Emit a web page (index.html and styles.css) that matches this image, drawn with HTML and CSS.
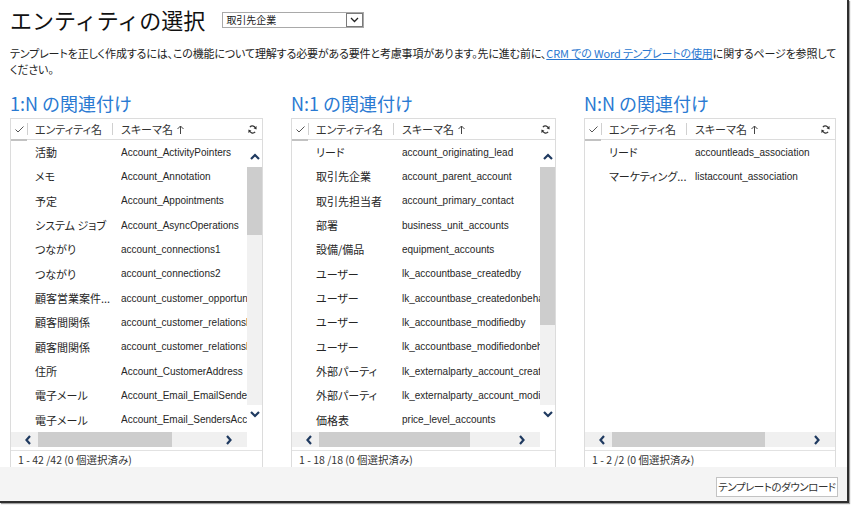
FILE: index.html
```html
<!DOCTYPE html>
<html lang="ja">
<head>
<meta charset="utf-8">
<title>エンティティの選択</title>
<link rel="stylesheet" href="styles.css">
</head>
<body>
<div class="frame">
  <div class="titlebar">
    <h1 class="title">エンティティの選択</h1>
    <div class="select">
      <span class="select-text">取引先企業</span>
      <span class="select-arrow"><svg width="9" height="6" viewBox="0 0 9 6"><polyline points="1,1 4.5,4.5 8,1" fill="none" stroke="#222" stroke-width="1.3"/></svg></span>
    </div>
  </div>
  <p class="desc">テンプレートを正しく作成するには、この機能について理解する必要がある要件と考慮事項があります。先に進む前に、<a class="link" href="#">CRM での Word テンプレートの使用</a>に関するページを参照して<br>ください。</p>

  <div class="panels">
    <section class="panel">
      <h2 class="panel-title">1:N の関連付け</h2>
      <div class="grid">
        <div class="grid-head">
          <span class="hcheck"><svg width="9" height="7" viewBox="0 0 9 7"><polyline points="0.5,3.5 3,6 8.5,0.5" fill="none" stroke="#555" stroke-width="1"/></svg></span>
          <span class="hsep"></span>
          <span class="hentity">エンティティ名</span>
          <span class="hsep"></span>
          <span class="hschema">スキーマ名 <svg width="7" height="9" viewBox="0 0 7 9"><path d="M3.5 9V1M0.5 4l3-3 3 3" fill="none" stroke="#444" stroke-width="1"/></svg></span>
          <span class="refresh"><svg width="9" height="9" viewBox="0 0 10 10"><path d="M8.6 4.2A3.7 3.7 0 0 0 2.1 2.4" fill="none" stroke="#333" stroke-width="1.4"/><path d="M1.4 5.8A3.7 3.7 0 0 0 7.9 7.6" fill="none" stroke="#333" stroke-width="1.4"/><path d="M9.6 1.2L9.4 5 6.2 3.6Z" fill="#333"/><path d="M0.4 8.8L0.6 5 3.8 6.4Z" fill="#333"/></svg></span>
        </div>
        <div class="grid-body">
          <div class="rows">
            <div class="row"><span class="c-entity">活動</span><span class="c-schema">Account_ActivityPointers</span></div>
            <div class="row"><span class="c-entity">メモ</span><span class="c-schema">Account_Annotation</span></div>
            <div class="row"><span class="c-entity">予定</span><span class="c-schema">Account_Appointments</span></div>
            <div class="row"><span class="c-entity">システム ジョブ</span><span class="c-schema">Account_AsyncOperations</span></div>
            <div class="row"><span class="c-entity">つながり</span><span class="c-schema">account_connections1</span></div>
            <div class="row"><span class="c-entity">つながり</span><span class="c-schema">account_connections2</span></div>
            <div class="row"><span class="c-entity">顧客営業案件...</span><span class="c-schema">account_customer_opportunity_roles</span></div>
            <div class="row"><span class="c-entity">顧客間関係</span><span class="c-schema">account_customer_relationship_customer</span></div>
            <div class="row"><span class="c-entity">顧客間関係</span><span class="c-schema">account_customer_relationship_partner</span></div>
            <div class="row"><span class="c-entity">住所</span><span class="c-schema">Account_CustomerAddress</span></div>
            <div class="row"><span class="c-entity">電子メール</span><span class="c-schema">Account_Email_EmailSender</span></div>
            <div class="row"><span class="c-entity">電子メール</span><span class="c-schema">Account_Email_SendersAccount</span></div>
          </div>
          <div class="vscroll">
            <span class="vbtn vbtn-up"><svg width="10" height="7" viewBox="0 0 10 7"><polyline points="1,6 5,2 9,6" fill="none" stroke="#1f3a60" stroke-width="2.2"/></svg></span>
            <span class="vthumb" style="height:68px"></span>
            <span class="vtrack"></span>
            <span class="vbtn vbtn-down"><svg width="10" height="7" viewBox="0 0 10 7"><polyline points="1,1 5,5 9,1" fill="none" stroke="#1f3a60" stroke-width="2.2"/></svg></span>
          </div>
        </div>
        <div class="hscroll with-v">
          <span class="hbtn hbtn-left"><svg width="6" height="10" viewBox="0 0 6 10"><polyline points="5,1 1.5,5 5,9" fill="none" stroke="#1f3a60" stroke-width="2.2"/></svg></span>
          <span class="hthumb" style="width:134px"></span>
          <span class="htrack"></span>
          <span class="hbtn hbtn-right"><svg width="6" height="10" viewBox="0 0 6 10"><polyline points="1,1 4.5,5 1,9" fill="none" stroke="#1f3a60" stroke-width="2.2"/></svg></span>
        </div>
        <div class="hgap"></div>
        <div class="grid-foot">1 - 42 /42 (0 個選択済み)</div>
      </div>
    </section>

    <section class="panel">
      <h2 class="panel-title">N:1 の関連付け</h2>
      <div class="grid">
        <div class="grid-head">
          <span class="hcheck"><svg width="9" height="7" viewBox="0 0 9 7"><polyline points="0.5,3.5 3,6 8.5,0.5" fill="none" stroke="#555" stroke-width="1"/></svg></span>
          <span class="hsep"></span>
          <span class="hentity">エンティティ名</span>
          <span class="hsep"></span>
          <span class="hschema">スキーマ名 <svg width="7" height="9" viewBox="0 0 7 9"><path d="M3.5 9V1M0.5 4l3-3 3 3" fill="none" stroke="#444" stroke-width="1"/></svg></span>
          <span class="refresh"><svg width="9" height="9" viewBox="0 0 10 10"><path d="M8.6 4.2A3.7 3.7 0 0 0 2.1 2.4" fill="none" stroke="#333" stroke-width="1.4"/><path d="M1.4 5.8A3.7 3.7 0 0 0 7.9 7.6" fill="none" stroke="#333" stroke-width="1.4"/><path d="M9.6 1.2L9.4 5 6.2 3.6Z" fill="#333"/><path d="M0.4 8.8L0.6 5 3.8 6.4Z" fill="#333"/></svg></span>
        </div>
        <div class="grid-body">
          <div class="rows">
            <div class="row"><span class="c-entity">リード</span><span class="c-schema">account_originating_lead</span></div>
            <div class="row"><span class="c-entity">取引先企業</span><span class="c-schema">account_parent_account</span></div>
            <div class="row"><span class="c-entity">取引先担当者</span><span class="c-schema">account_primary_contact</span></div>
            <div class="row"><span class="c-entity">部署</span><span class="c-schema">business_unit_accounts</span></div>
            <div class="row"><span class="c-entity">設備/備品</span><span class="c-schema">equipment_accounts</span></div>
            <div class="row"><span class="c-entity">ユーザー</span><span class="c-schema">lk_accountbase_createdby</span></div>
            <div class="row"><span class="c-entity">ユーザー</span><span class="c-schema">lk_accountbase_createdonbehalf</span></div>
            <div class="row"><span class="c-entity">ユーザー</span><span class="c-schema">lk_accountbase_modifiedby</span></div>
            <div class="row"><span class="c-entity">ユーザー</span><span class="c-schema">lk_accountbase_modifiedonbehalf</span></div>
            <div class="row"><span class="c-entity">外部パーティ</span><span class="c-schema">lk_externalparty_account_createdby</span></div>
            <div class="row"><span class="c-entity">外部パーティ</span><span class="c-schema">lk_externalparty_account_modifiedby</span></div>
            <div class="row"><span class="c-entity">価格表</span><span class="c-schema">price_level_accounts</span></div>
          </div>
          <div class="vscroll">
            <span class="vbtn vbtn-up"><svg width="10" height="7" viewBox="0 0 10 7"><polyline points="1,6 5,2 9,6" fill="none" stroke="#1f3a60" stroke-width="2.2"/></svg></span>
            <span class="vthumb" style="height:158px"></span>
            <span class="vtrack"></span>
            <span class="vbtn vbtn-down"><svg width="10" height="7" viewBox="0 0 10 7"><polyline points="1,1 5,5 9,1" fill="none" stroke="#1f3a60" stroke-width="2.2"/></svg></span>
          </div>
        </div>
        <div class="hscroll with-v">
          <span class="hbtn hbtn-left"><svg width="6" height="10" viewBox="0 0 6 10"><polyline points="5,1 1.5,5 5,9" fill="none" stroke="#1f3a60" stroke-width="2.2"/></svg></span>
          <span class="hthumb" style="width:151px"></span>
          <span class="htrack"></span>
          <span class="hbtn hbtn-right"><svg width="6" height="10" viewBox="0 0 6 10"><polyline points="1,1 4.5,5 1,9" fill="none" stroke="#1f3a60" stroke-width="2.2"/></svg></span>
        </div>
        <div class="hgap"></div>
        <div class="grid-foot">1 - 18 /18 (0 個選択済み)</div>
      </div>
    </section>

    <section class="panel">
      <h2 class="panel-title">N:N の関連付け</h2>
      <div class="grid">
        <div class="grid-head">
          <span class="hcheck"><svg width="9" height="7" viewBox="0 0 9 7"><polyline points="0.5,3.5 3,6 8.5,0.5" fill="none" stroke="#555" stroke-width="1"/></svg></span>
          <span class="hsep"></span>
          <span class="hentity">エンティティ名</span>
          <span class="hsep"></span>
          <span class="hschema">スキーマ名 <svg width="7" height="9" viewBox="0 0 7 9"><path d="M3.5 9V1M0.5 4l3-3 3 3" fill="none" stroke="#444" stroke-width="1"/></svg></span>
          <span class="refresh"><svg width="9" height="9" viewBox="0 0 10 10"><path d="M8.6 4.2A3.7 3.7 0 0 0 2.1 2.4" fill="none" stroke="#333" stroke-width="1.4"/><path d="M1.4 5.8A3.7 3.7 0 0 0 7.9 7.6" fill="none" stroke="#333" stroke-width="1.4"/><path d="M9.6 1.2L9.4 5 6.2 3.6Z" fill="#333"/><path d="M0.4 8.8L0.6 5 3.8 6.4Z" fill="#333"/></svg></span>
        </div>
        <div class="grid-body">
          <div class="rows">
            <div class="row"><span class="c-entity">リード</span><span class="c-schema">accountleads_association</span></div>
            <div class="row"><span class="c-entity">マーケティング...</span><span class="c-schema">listaccount_association</span></div>
          </div>
        </div>
        <div class="hscroll">
          <span class="hbtn hbtn-left"><svg width="6" height="10" viewBox="0 0 6 10"><polyline points="5,1 1.5,5 5,9" fill="none" stroke="#1f3a60" stroke-width="2.2"/></svg></span>
          <span class="hthumb" style="width:153px"></span>
          <span class="htrack"></span>
          <span class="hbtn hbtn-right"><svg width="6" height="10" viewBox="0 0 6 10"><polyline points="1,1 4.5,5 1,9" fill="none" stroke="#1f3a60" stroke-width="2.2"/></svg></span>
        </div>
        <div class="hgap"></div>
        <div class="grid-foot">1 - 2 /2 (0 個選択済み)</div>
      </div>
    </section>
  </div>

  <div class="bottombar">
    <button class="btn" type="button">テンプレートのダウンロード</button>
  </div>
</div>
</body>
</html>
```

FILE: styles.css
```css
* { box-sizing: border-box; }

html, body {
  margin: 0;
  padding: 0;
  background: #fff;
}

body {
  width: 851px;
  height: 505px;
  overflow: hidden;
  font-family: "Noto Sans CJK JP", "Noto Sans", sans-serif;
  color: #222;
}

.frame {
  width: 849px;
  height: 503px;
  display: flex;
  flex-direction: column;
  background: #fff;
  border-right: 2px solid #2e2e2e;
  border-bottom: 2px solid #2e2e2e;
  box-shadow: 1px 1px 1px #a0a0a0;
}

/* title row */
.titlebar {
  display: flex;
  align-items: flex-start;
  height: 32px;
  padding: 6px 0 0 10px;
}

.title {
  margin: 0;
  font-size: 22px;
  line-height: 26px;
  font-weight: 400;
  color: #111;
}

.select {
  margin: 6px 0 0 17px;
  width: 142px;
  height: 16px;
  border: 1px solid #a9a9a9;
  display: flex;
  align-items: center;
  justify-content: space-between;
  padding: 0 0 0 3px;
  font-size: 10px;
  line-height: 14px;
  color: #222;
}

.select-arrow {
  width: 17px;
  height: 14px;
  border: 1px solid #7a7a7a;
  display: flex;
  align-items: center;
  justify-content: center;
  background: #fff;
}

.desc {
  margin: 13px 0 0 10px;
  height: 32px;
  font-size: 11px;
  line-height: 16px;
  letter-spacing: -0.15px;
  white-space: nowrap;
  font-feature-settings: "palt";
  color: #222;
}

.link {
  color: #2a78d0;
  text-decoration: underline;
}

/* panels */
.panels {
  display: grid;
  grid-template-columns: 253px 265px 252px;
  column-gap: 28px;
  padding-left: 10px;
  margin-top: 15px;
}

.panel-title {
  margin: 0 0 4px;
  font-size: 18px;
  line-height: 22px;
  font-weight: 400;
  color: #2a7ad2;
}

.grid {
  height: 349px;
  display: flex;
  flex-direction: column;
  border: 1px solid #dcdcdc;
  border-bottom: none;
}

.grid-head {
  height: 21px;
  flex: none;
  display: flex;
  align-items: center;
  border-bottom: 1px solid #dcdcdc;
  font-size: 11px;
  color: #333;
  font-feature-settings: "palt";
}

.hcheck {
  width: 16px;
  height: 22px;
  align-self: flex-start;
  display: flex;
  align-items: center;
  justify-content: center;
  border-bottom: 2px solid #c2c2c2;
  padding-top: 1px;
}

.hsep {
  width: 1px;
  height: 12px;
  background: #d0d0d0;
}

.hentity {
  width: 84px;
  padding-left: 7px;
  white-space: nowrap;
}

.hschema {
  flex: 1;
  padding-left: 8px;
  display: flex;
  align-items: center;
  gap: 4px;
  white-space: nowrap;
}

.refresh {
  width: 14px;
  margin-right: 3px;
  display: flex;
  align-items: center;
  justify-content: center;
}

.grid-body {
  height: 292px;
  flex: none;
  display: flex;
}

.rows {
  flex: 1;
  min-width: 0;
  overflow: hidden;
}

.row {
  height: 24.33px;
  display: flex;
  align-items: center;
  padding-left: 24px;
  white-space: nowrap;
  color: #262626;
}

.c-entity {
  width: 86px;
  flex: none;
  font-size: 11px;
  font-feature-settings: "palt";
}

.c-schema {
  flex: 1;
  min-width: 0;
  overflow: hidden;
  font-family: "Liberation Sans", Arial, sans-serif;
  font-size: 10px;
}

.vscroll {
  width: 15px;
  flex: none;
  display: flex;
  flex-direction: column;
  background: #f1f1f1;
}

.vbtn {
  height: 27px;
  flex: none;
  display: flex;
  justify-content: center;
  align-items: flex-start;
  background: #fff;
}

.vbtn-up { padding-top: 13px; }
.vbtn-down { padding-top: 6px; }

.vthumb {
  flex: none;
  background: #cdcdcd;
}

.vtrack { flex: 1; }

.hscroll {
  height: 15px;
  flex: none;
  display: flex;
  align-items: stretch;
  background: #f0f0f0;
}

.hscroll.with-v { margin-right: 15px; }

.hbtn {
  width: 27px;
  flex: none;
  display: flex;
  align-items: center;
}

.hbtn-left { padding-left: 14px; }
.hbtn-right { padding-left: 6px; }

.hthumb {
  flex: none;
  background: #cdcdcd;
}

.htrack { flex: 1; }

.hgap {
  height: 3px;
  flex: none;
}

.grid-foot {
  height: 17px;
  flex: none;
  border-top: 1px solid #e2e2e2;
  padding-left: 7px;
  font-size: 10.5px;
  line-height: 17px;
  color: #333;
  font-feature-settings: "palt";
  white-space: nowrap;
  overflow: hidden;
}

/* bottom bar */
.bottombar {
  margin-top: auto;
  height: 34px;
  display: flex;
  justify-content: flex-end;
  align-items: flex-start;
  padding: 10px 9px 0 0;
  background: #f4f4f4;
}

.btn {
  width: 122px;
  height: 20px;
  padding: 0;
  border: 1px solid #c3c3c3;
  background: #fff;
  font-family: "Noto Sans CJK JP", sans-serif;
  font-size: 10.5px;
  line-height: 18px;
  letter-spacing: -0.45px;
  white-space: nowrap;
  overflow: hidden;
  color: #333;
  font-feature-settings: "palt";
}
```
